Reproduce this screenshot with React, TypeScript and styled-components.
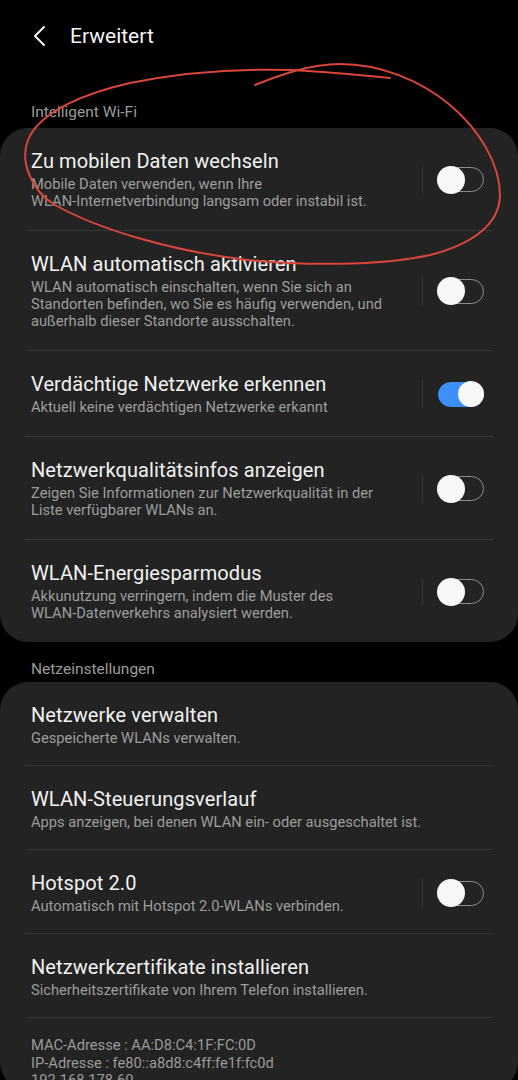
import React from "react";
import styled, { createGlobalStyle } from "styled-components";

const GlobalStyle = createGlobalStyle`
  html, body {
    margin: 0;
    padding: 0;
    background: #000000;
  }
  * {
    box-sizing: border-box;
  }
`;

interface Item {
  title: string;
  lines: string[];
  toggle?: "on" | "off";
}

const intelligent: Item[] = [
  {
    title: "Zu mobilen Daten wechseln",
    lines: [
      "Mobile Daten verwenden, wenn Ihre",
      "WLAN-Internetverbindung langsam oder instabil ist.",
    ],
    toggle: "off",
  },
  {
    title: "WLAN automatisch aktivieren",
    lines: [
      "WLAN automatisch einschalten, wenn Sie sich an",
      "Standorten befinden, wo Sie es häufig verwenden, und",
      "außerhalb dieser Standorte ausschalten.",
    ],
    toggle: "off",
  },
  {
    title: "Verdächtige Netzwerke erkennen",
    lines: ["Aktuell keine verdächtigen Netzwerke erkannt"],
    toggle: "on",
  },
  {
    title: "Netzwerkqualitätsinfos anzeigen",
    lines: [
      "Zeigen Sie Informationen zur Netzwerkqualität in der",
      "Liste verfügbarer WLANs an.",
    ],
    toggle: "off",
  },
  {
    title: "WLAN-Energiesparmodus",
    lines: [
      "Akkunutzung verringern, indem die Muster des",
      "WLAN-Datenverkehrs analysiert werden.",
    ],
    toggle: "off",
  },
];

const network: Item[] = [
  { title: "Netzwerke verwalten", lines: ["Gespeicherte WLANs verwalten."] },
  {
    title: "WLAN-Steuerungsverlauf",
    lines: ["Apps anzeigen, bei denen WLAN ein- oder ausgeschaltet ist."],
  },
  {
    title: "Hotspot 2.0",
    lines: ["Automatisch mit Hotspot 2.0-WLANs verbinden."],
    toggle: "off",
  },
  {
    title: "Netzwerkzertifikate installieren",
    lines: ["Sicherheitszertifikate von Ihrem Telefon installieren."],
  },
];

const SettingRow: React.FC<{ item: Item; dense?: boolean }> = ({ item, dense }) => (
  <Row $dense={dense}>
    <TextCol>
      <Title>{item.title}</Title>
      <Sub>
        {item.lines.map((l, i) => (
          <div key={i}>{l}</div>
        ))}
      </Sub>
    </TextCol>
    {item.toggle && (
      <ToggleCol>
        <VDivider />
        <Switch $on={item.toggle === "on"}>
          <Thumb $on={item.toggle === "on"} />
        </Switch>
      </ToggleCol>
    )}
  </Row>
);

export default function App() {
  return (
    <Page>
      <GlobalStyle />
      <Header>
        <svg width="14" height="22" viewBox="0 0 14 22">
          <path d="M12 2 L3 11 L12 20" fill="none" stroke="#f4f4f4" strokeWidth="2" strokeLinecap="round" strokeLinejoin="round" />
        </svg>
        <HeaderTitle>Erweitert</HeaderTitle>
      </Header>

      <SectionLabel $first>Intelligent Wi-Fi</SectionLabel>
      <Card>
        {intelligent.map((it) => (
          <SettingRow key={it.title} item={it} />
        ))}
      </Card>

      <SectionLabel>Netzeinstellungen</SectionLabel>
      <Card>
        {network.map((it) => (
          <SettingRow key={it.title} item={it} dense />
        ))}
        <InfoBlock>
          <div>MAC-Adresse : AA:D8:C4:1F:FC:0D</div>
          <div>IP-Adresse : fe80::a8d8:c4ff:fe1f:fc0d</div>
          <div>192.168.178.60</div>
        </InfoBlock>
      </Card>

      <Scribble width="518" height="300" viewBox="0 0 518 300">
        <path
          d="M255,85 C280,75 310,64 340,64 C380,64 420,80 450,105 C480,130 500,165 500,195 C500,225 470,245 430,255 C380,266 300,266 240,259 C170,250 100,230 55,205 C30,190 20,160 28,140 C40,110 90,92 130,83 C170,75 220,68 290,70 C330,72 370,76 390,78"
          fill="none"
          stroke="#d9463c"
          strokeWidth="2"
          strokeLinecap="round"
        />
      </Scribble>
    </Page>
  );
}

const Page = styled.div`
  position: relative;
  width: 518px;
  height: 1080px;
  overflow: hidden;
  background: #000000;
  font-family: Roboto, "Noto Sans", sans-serif;
`;

const Header = styled.div`
  display: flex;
  align-items: center;
  gap: 24px;
  height: 50px;
  padding: 22px 0 0 32px;
`;

const HeaderTitle = styled.div`
  font-size: 21px;
  line-height: 28px;
  color: #f4f4f4;
`;

const SectionLabel = styled.div<{ $first?: boolean }>`
  font-size: 15.5px;
  line-height: 20px;
  color: #9a9a9a;
  padding: 0 31px;
  margin-top: ${(p) => (p.$first ? "52px" : "17px")};
  margin-bottom: ${(p) => (p.$first ? "6px" : "3px")};
`;

const Card = styled.div`
  background: #232323;
  border-radius: 28px;
  padding: 0 25px;
`;

const Row = styled.div<{ $dense?: boolean }>`
  display: flex;
  align-items: center;
  padding: ${(p) => (p.$dense ? "21px 0 18px 6px" : "21px 0 20px 6px")};
  border-bottom: 1px solid #363636;
  &:last-child {
    border-bottom: none;
  }
`;

const TextCol = styled.div`
  flex: 1;
  min-width: 0;
`;

const Title = styled.div`
  font-size: 20px;
  line-height: 24px;
  letter-spacing: 0.1px;
  color: #f2f2f2;
`;

const Sub = styled.div`
  margin-top: 3px;
  font-size: 14.7px;
  line-height: 17px;
  color: #9d9d9d;
`;

const ToggleCol = styled.div`
  display: flex;
  align-items: center;
  gap: 15px;
  padding-right: 9px;
`;

const VDivider = styled.div`
  width: 1px;
  height: 28px;
  background: #3a3a3a;
`;

const Switch = styled.div<{ $on: boolean }>`
  position: relative;
  width: 46px;
  height: 25px;
  border-radius: 13px;
  border: 1.5px solid ${(p) => (p.$on ? "#3e8ff7" : "#8c8c8c")};
  background: ${(p) => (p.$on ? "#3e8ff7" : "transparent")};
`;

const Thumb = styled.div<{ $on: boolean }>`
  position: absolute;
  top: 50%;
  left: ${(p) => (p.$on ? "19px" : "-2px")};
  width: ${(p) => (p.$on ? "26px" : "28px")};
  height: ${(p) => (p.$on ? "26px" : "28px")};
  border-radius: 50%;
  background: #f7f7f7;
  transform: translateY(-50%);
`;

const InfoBlock = styled.div`
  padding: 19px 0 0 6px;
  font-size: 14.7px;
  line-height: 17.5px;
  color: #9a9a9a;
`;

const Scribble = styled.svg`
  position: absolute;
  top: 0;
  left: 0;
  pointer-events: none;
`;
